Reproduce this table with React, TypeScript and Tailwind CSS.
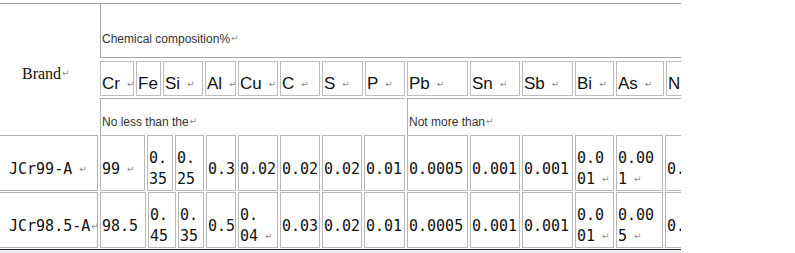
const sans = "font-['Liberation_Sans',Arial,sans-serif]";
const mono = "font-['DejaVu_Sans_Mono',monospace]";

const Mark = ({ gap = true }: { gap?: boolean }) => (
  <span className={`${gap ? "ml-[7px]" : "ml-[1px]"} text-[9px] text-[#8c8c8c] font-['DejaVu_Sans',sans-serif] align-middle`}>
    ↵
  </span>
);

const elements: [string, number, boolean][] = [
  ["Cr", 34, true],
  ["Fe", 25, false],
  ["Si", 40, true],
  ["Al", 31, true],
  ["Cu", 40, true],
  ["C", 40, true],
  ["S", 41, true],
  ["P", 40, true],
  ["Pb", 61, true],
  ["Sn", 50, true],
  ["Sb", 51, true],
  ["Bi", 39, true],
  ["As", 48, true],
  ["N", 40, false],
];

type Cell = { w: number; lines: string[]; mark?: boolean };

const rows: { brand: string; markGap: boolean; cells: Cell[] }[] = [
  {
    brand: "JCr99-A",
    markGap: true,
    cells: [
      { w: 45, lines: ["99"], mark: true },
      { w: 26, lines: ["0.", "35"] },
      { w: 29, lines: ["0.", "25"] },
      { w: 30, lines: ["0.3"] },
      { w: 40, lines: ["0.02"] },
      { w: 40, lines: ["0.02"] },
      { w: 40, lines: ["0.02"] },
      { w: 41, lines: ["0.01"] },
      { w: 61, lines: ["0.0005"] },
      { w: 50, lines: ["0.001"] },
      { w: 51, lines: ["0.001"] },
      { w: 39, lines: ["0.0", "01"], mark: true },
      { w: 47, lines: ["0.00", "1"], mark: true },
      { w: 50, lines: ["0."] },
    ],
  },
  {
    brand: "JCr98.5-A",
    markGap: false,
    cells: [
      { w: 46, lines: ["98.5"] },
      { w: 28, lines: ["0.", "45"] },
      { w: 26, lines: ["0.", "35"] },
      { w: 30, lines: ["0.5"] },
      { w: 40, lines: ["0.", "04"], mark: true },
      { w: 40, lines: ["0.03"] },
      { w: 40, lines: ["0.02"] },
      { w: 41, lines: ["0.01"] },
      { w: 61, lines: ["0.0005"] },
      { w: 50, lines: ["0.001"] },
      { w: 51, lines: ["0.001"] },
      { w: 39, lines: ["0.0", "01"], mark: true },
      { w: 47, lines: ["0.00", "5"], mark: true },
      { w: 50, lines: ["0."] },
    ],
  },
];

export default function App() {
  return (
    <div className="w-[795px] h-[253px] bg-white overflow-hidden pt-[3px]">
      <div className="w-[681px] overflow-hidden">
        <div className="w-[740px]">
          {/* Header block */}
          <div className="flex gap-[2px] border-t border-[#a0a0a0]">
            <div className="w-[98px] h-[130px] shrink-0 flex items-center pt-[10px] pl-[22px] text-[16px] text-[#111] font-['Liberation_Serif',serif]">
              Brand<Mark gap={false} />
            </div>
            <div className="flex-1 flex flex-col">
              <div className={`h-[54px] border-l border-b border-[#a8a8a8] flex items-center pt-[16px] pl-[1px] text-[12px] text-[#333] ${sans}`}>
                Chemical composition%<Mark gap={false} />
              </div>
              <div className={`mt-[3px] flex gap-[2px] ${sans}`}>
                {elements.map(([name, w, mark]) => (
                  <div
                    key={name}
                    className="h-[35px] shrink-0 border border-[#bdbdbd] flex items-center pt-[11px] pl-[1px] text-[17px] leading-[20px] text-[#111] whitespace-nowrap overflow-hidden"
                    style={{ width: w }}
                  >
                    {name}
                    {mark && <Mark />}
                  </div>
                ))}
              </div>
              <div className={`mt-[2px] flex gap-[2px] text-[12px] text-[#333] ${sans}`}>
                <div className="w-[305px] h-[37px] shrink-0 border-t border-l border-[#b0b0b0] flex items-center pt-[10px] pl-[1px]">
                  No less than the<Mark gap={false} />
                </div>
                <div className="flex-1 h-[37px] border-t border-l border-[#b0b0b0] flex items-center pt-[10px] pl-[1px]">
                  Not more than<Mark gap={false} />
                </div>
              </div>
            </div>
          </div>

          {/* Data rows */}
          <div className={`flex flex-col gap-[1px] text-[15px] leading-[21px] text-[#111] ${mono}`}>
            {rows.map((row) => (
              <div key={row.brand} className="flex gap-[2px]">
                <div className="w-[98px] h-[56px] shrink-0 border-t border-r border-b border-[#b0b0b0] flex items-center pt-[12px] pl-[9px] whitespace-nowrap">
                  {row.brand}
                  <Mark gap={row.markGap} />
                </div>
                {row.cells.map((c, i) => (
                  <div
                    key={i}
                    className="h-[56px] shrink-0 border border-[#b8b8b8] flex items-center pt-[12px] pl-[1px] whitespace-nowrap overflow-hidden"
                    style={{ width: c.w }}
                  >
                    <div>
                      {c.lines.map((l, j) => (
                        <div key={j}>
                          {l}
                          {c.mark && j === c.lines.length - 1 && <Mark />}
                        </div>
                      ))}
                    </div>
                  </div>
                ))}
              </div>
            ))}
          </div>
        </div>
        <div className="mt-[1px] h-[1px] bg-[#222]" />
        <div className="h-[4px] bg-[#eef0f3]" />
      </div>
    </div>
  );
}
